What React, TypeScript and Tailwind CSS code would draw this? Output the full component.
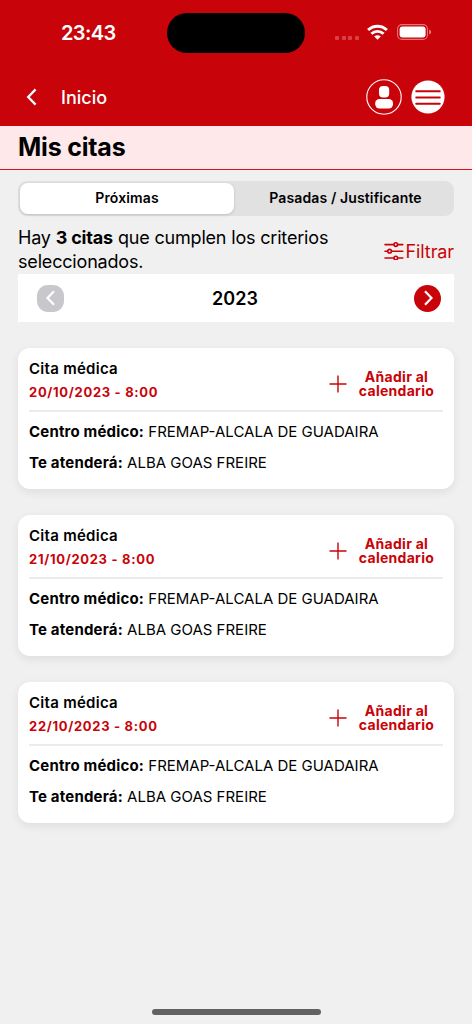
interface Appointment {
  id: number;
  date: string;
  center: string;
  attendant: string;
}

const appointments: Appointment[] = [
  { id: 1, date: "20/10/2023 - 8:00", center: "FREMAP-ALCALA DE GUADAIRA", attendant: "ALBA GOAS FREIRE" },
  { id: 2, date: "21/10/2023 - 8:00", center: "FREMAP-ALCALA DE GUADAIRA", attendant: "ALBA GOAS FREIRE" },
  { id: 3, date: "22/10/2023 - 8:00", center: "FREMAP-ALCALA DE GUADAIRA", attendant: "ALBA GOAS FREIRE" },
];

const WifiIcon = () => (
  <svg className="w-[21px] h-4" viewBox="0 0 21 16" fill="white">
    <path d="M10.5 15.8L7.2 12.5Q10.5 9.8 13.8 12.5Z" />
    <g fill="none" stroke="white" strokeWidth={2.9}>
      <path d="M1.1 6C6.4 0.9 14.6 0.9 19.9 6" />
      <path d="M4.4 9.8C8 6.5 13 6.5 16.6 9.8" />
    </g>
  </svg>
);

const BatteryIcon = () => (
  <svg className="w-[35px] h-4" viewBox="0 0 35 16" fill="none">
    <rect x="0.6" y="0.6" width="29.8" height="14.8" rx="4.4" stroke="white" strokeOpacity={0.45} strokeWidth={1.1} />
    <rect x="2.6" y="2.6" width="26" height="10.8" rx="3" fill="white" />
    <path d="M32.2 5.6Q34.2 6.4 34.2 8T32.2 10.4Z" fill="white" fillOpacity={0.5} />
  </svg>
);

const UserIcon = () => (
  <svg className="w-9 h-9" viewBox="0 0 36 36" fill="none">
    <circle cx="18" cy="18" r="17.2" stroke="white" strokeWidth={1.1} />
    <rect x="13" y="7" width="10.2" height="11.4" rx="4" fill="white" />
    <rect x="9.2" y="20" width="17.8" height="9.4" rx="4.2" fill="white" />
  </svg>
);

const MenuIcon = () => (
  <svg className="w-[34px] h-[34px]" viewBox="0 0 34 34" fill="none">
    <circle cx="17" cy="17" r="16.6" fill="white" />
    <path d="M5.2 11.2H28.8M5.2 17.5H28.8M5.2 23.8H28.8" stroke="#c80309" strokeWidth={1.9} strokeLinecap="round" />
  </svg>
);

const FilterIcon = () => (
  <svg className="w-5 h-[18px]" viewBox="0 0 20 18" fill="none" stroke="#c80309" strokeWidth={1.6} strokeLinecap="round">
    <path d="M1 2.6H9.5M14 2.6H18.8M1 9.2H3.4M7.8 9.2H18.8M1 16H9.5M14 16H18.8" />
    <circle cx="11.8" cy="2.6" r="1.8" />
    <circle cx="5.6" cy="9.2" r="1.8" />
    <circle cx="11.8" cy="16" r="1.8" />
  </svg>
);

const PlusIcon = () => (
  <svg className="w-[18px] h-[18px]" viewBox="0 0 18 18" fill="none" stroke="#c80309" strokeWidth={1.4}>
    <path d="M9 0.5V17.5M0.5 9H17.5" />
  </svg>
);

const AppointmentCard = ({ item }: { item: Appointment }) => (
  <div className="h-[141px] rounded-xl bg-white px-[11px] shadow-[0_3px_10px_rgba(0,0,0,0.08)]">
    <div className="flex h-[64px] justify-between border-b-2 border-[#ebebeb]">
      <div className="pt-[9px]">
        <h2 className="text-[15px] leading-6 font-semibold tracking-[0.28px]">Cita médica</h2>
        <p className="-mt-px text-[13px] leading-6 font-bold tracking-[0.69px] text-[#c80309]">{item.date}</p>
      </div>
      <button className="flex items-center gap-[11px] pt-[10px] pr-[8px] text-[#c80309]">
        <PlusIcon />
        <span className="w-[77px] text-center text-[14px] leading-[14px] font-bold tracking-[0.28px] whitespace-nowrap">
          Añadir al
          <br />
          calendario
        </span>
      </button>
    </div>
    <p className="pt-1 text-[15px] leading-[31px] whitespace-nowrap">
      <b className="font-bold tracking-[0.18px]">Centro médico:</b> <span>{item.center}</span>
    </p>
    <p className="text-[15px] leading-[31px] whitespace-nowrap">
      <b className="font-bold tracking-[0.18px]">Te atenderá:</b> <span>{item.attendant}</span>
    </p>
  </div>
);

export default function App() {
  return (
    <div className="flex h-[1024px] w-[472px] flex-col overflow-hidden bg-[#f0f0f0] font-['Inter',sans-serif] text-black">
      <header className="h-[126px] bg-[#c80309] text-white">
        {/* Status bar */}
        <div className="flex h-[66px] items-center">
          <div className="w-[167px] pl-[61px] text-[20px] font-semibold tracking-[-0.6px]">23:43</div>
          <div className="h-10 w-[138px] rounded-full bg-black" />
          <div className="ml-[30px] flex gap-[2.5px] pt-[9px]">
            <i className="h-1 w-1 rounded-[1px] bg-white/25" />
            <i className="h-1 w-1 rounded-[1px] bg-white/25" />
            <i className="h-1 w-1 rounded-[1px] bg-white/25" />
            <i className="h-1 w-1 rounded-[1px] bg-white/25" />
          </div>
          <div className="flex gap-[9px] pb-0.5 pl-2">
            <WifiIcon />
            <BatteryIcon />
          </div>
        </div>
        {/* Navigation */}
        <div className="flex h-[60px] items-center pt-0.5 pl-[26px]">
          <svg className="h-[18px] w-3" viewBox="0 0 12 18" fill="none" stroke="white" strokeWidth={2.3}>
            <path d="M9.6 1.4L2.2 9L9.6 16.6" />
          </svg>
          <span className="ml-[23px] text-[18px] font-medium">Inicio</span>
          <div className="mr-[27px] ml-auto flex items-center gap-[9px]">
            <UserIcon />
            <MenuIcon />
          </div>
        </div>
      </header>

      <div className="flex h-[43px] items-center bg-[#ffe8ea] px-[18px]">
        <h1 className="text-[25px] font-bold tracking-[-0.2px]">Mis citas</h1>
      </div>
      <div className="h-px bg-[#d8131b]" />

      <main className="flex-1 px-[18px] pt-[10.5px]">
        {/* Tabs */}
        <div className="flex h-[35px] rounded-[9px] bg-[#e1e1e1] p-[2px] text-[14px] font-semibold tracking-[0.13px]">
          <button className="w-[214px] rounded-[8px] bg-white pb-px shadow-[0_1px_3px_rgba(0,0,0,0.15)]">Próximas</button>
          <button className="flex-1 pb-px pl-[5px]">Pasadas / Justificante</button>
        </div>

        <div className="flex h-[58.5px] items-center justify-between pt-[10px]">
          <p className="text-[18px] leading-6 tracking-[-0.18px] whitespace-nowrap">
            Hay <b className="font-bold">3 citas</b> que cumplen los criterios
            <br />
            seleccionados.
          </p>
          <button className="flex items-center gap-[2px] pt-[3px] text-[18px] tracking-[-0.1px] text-[#c80309]">
            <FilterIcon />
            Filtrar
          </button>
        </div>

        <div className="flex h-12 items-center bg-white pr-[13px] pl-[19px]">
          <button className="flex h-[27px] w-[27px] items-center justify-center rounded-[11px] bg-[#c8c7cc]">
            <svg className="h-4 w-3" viewBox="0 0 12 16" fill="none" stroke="white" strokeWidth={2.2}>
              <path d="M9 1.2L2.5 8L9 14.8" />
            </svg>
          </button>
          <span className="flex-1 pr-2 text-center text-[18px] font-semibold">2023</span>
          <button className="flex h-[27px] w-[27px] items-center justify-center rounded-full bg-[#c80309]">
            <svg className="h-4 w-3" viewBox="0 0 12 16" fill="none" stroke="white" strokeWidth={2.2}>
              <path d="M3 1.2L9.5 8L3 14.8" />
            </svg>
          </button>
        </div>

        <div className="flex flex-col gap-[26px] pt-[26px]">
          {appointments.map((item) => (
            <AppointmentCard key={item.id} item={item} />
          ))}
        </div>
      </main>

      <footer className="flex justify-center pb-[9px]">
        <div className="h-1.5 w-[169px] rounded-full bg-[#626262]" />
      </footer>
    </div>
  );
}
